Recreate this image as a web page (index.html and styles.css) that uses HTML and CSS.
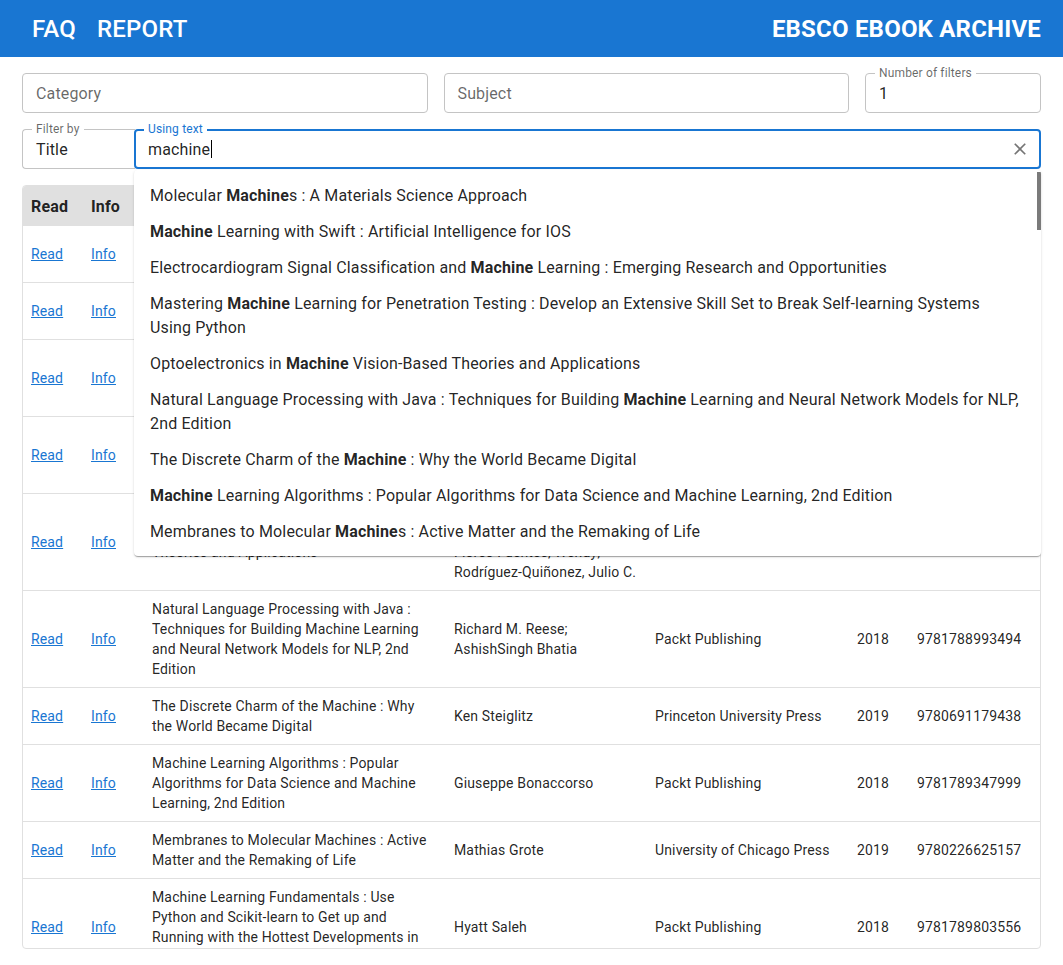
FILE: index.html
```html
<!DOCTYPE html>
<html lang="en">
<head>
<meta charset="utf-8">
<title>EBSCO Ebook Archive</title>
<link rel="stylesheet" href="styles.css">
</head>
<body>
<header class="appbar">
  <nav class="nav">
    <a class="nav-link">FAQ</a>
    <a class="nav-link">REPORT</a>
  </nav>
  <div class="brand">EBSCO EBOOK ARCHIVE</div>
</header>

<main class="content">
  <div class="filters-row">
    <div class="field"><span class="placeholder">Category</span></div>
    <div class="field"><span class="placeholder">Subject</span></div>
    <div class="field">
      <span class="float-label">Number of filters</span>
      <span class="value">1</span>
    </div>
  </div>

  <div class="search-row">
    <div class="field filter-by">
      <span class="float-label">Filter by</span>
      <span class="value">Title</span>
    </div>
    <div class="field search focused">
      <span class="float-label">Using text</span>
      <span class="value">machine<span class="caret"></span></span>
      <svg class="clear" viewBox="0 0 24 24" width="20" height="20"><path d="M19 6.41 17.59 5 12 10.59 6.41 5 5 6.41 10.59 12 5 17.59 6.41 19 12 13.41 17.59 19 19 17.59 13.41 12z"/></svg>

      <div class="popup">
        <ul class="options">
          <li>Molecular <b>Machine</b>s : A Materials Science Approach</li>
          <li><b>Machine</b> Learning with Swift : Artificial Intelligence for IOS</li>
          <li>Electrocardiogram Signal Classification and <b>Machine</b> Learning : Emerging Research and Opportunities</li>
          <li>Mastering <b>Machine</b> Learning for Penetration Testing : Develop an Extensive Skill Set to Break Self-learning Systems Using Python</li>
          <li>Optoelectronics in <b>Machine</b> Vision-Based Theories and Applications</li>
          <li>Natural Language Processing with Java : Techniques for Building <b>Machine</b> Learning and Neural Network Models for NLP, 2nd Edition</li>
          <li>The Discrete Charm of the <b>Machine</b> : Why the World Became Digital</li>
          <li><b>Machine</b> Learning Algorithms : Popular Algorithms for Data Science and Machine Learning, 2nd Edition</li>
          <li>Membranes to Molecular <b>Machine</b>s : Active Matter and the Remaking of Life</li>
          <li><b>Machine</b> Learning Fundamentals : Use Python and Scikit-learn to Get up and Running with the Hottest Developments in Machine Learning</li>
        </ul>
        <div class="thumb"></div>
      </div>
    </div>
  </div>

  <div class="table-wrap">
    <table class="books">
      <colgroup>
        <col class="c-read"><col class="c-info"><col class="c-title"><col class="c-author"><col class="c-pub"><col class="c-year"><col class="c-isbn">
      </colgroup>
      <thead>
        <tr><th>Read</th><th>Info</th><th>Title</th><th>Author</th><th>Publisher</th><th>Year</th><th>ISBN</th></tr>
      </thead>
      <tbody>
        <tr><td><a class="lnk">Read</a></td><td><a class="lnk">Info</a></td><td>Molecular Machines : A Materials Science Approach</td><td>Bruce A. Smith</td><td>CRC Press</td><td>2018</td><td>9781138556379</td></tr>
        <tr><td><a class="lnk">Read</a></td><td><a class="lnk">Info</a></td><td>Machine Learning with Swift : Artificial Intelligence for IOS</td><td>Alexander Sosnovshchenko</td><td>Packt Publishing</td><td>2018</td><td>9781787121515</td></tr>
        <tr><td><a class="lnk">Read</a></td><td><a class="lnk">Info</a></td><td>Electrocardiogram Signal Classification and Machine Learning : Emerging Research and Opportunities</td><td>Pinky Soni</td><td>IGI Global</td><td>2018</td><td>9781522555803</td></tr>
        <tr><td><a class="lnk">Read</a></td><td><a class="lnk">Info</a></td><td>Mastering Machine Learning for Penetration Testing : Develop an Extensive Skill Set to Break Self-learning Systems</td><td>Chiheb Chebbi</td><td>Packt Publishing</td><td>2018</td><td>9781788997409</td></tr>
        <tr><td><a class="lnk">Read</a></td><td><a class="lnk">Info</a></td><td>Optoelectronics in Machine Vision-Based Theories and Applications</td><td>Rivas-Lopez, Moises; Sergiyenko, Oleg; <span class="nw">Flores-Fuentes,</span> Wendy; <span class="nw">Rodríguez-Quiñonez,</span> Julio C.</td><td>IGI Global</td><td>2019</td><td>9781522557517</td></tr>
        <tr><td><a class="lnk">Read</a></td><td><a class="lnk">Info</a></td><td>Natural Language Processing with Java : Techniques for Building Machine Learning and Neural Network Models for NLP, 2nd Edition</td><td>Richard M. Reese; AshishSingh Bhatia</td><td>Packt Publishing</td><td>2018</td><td>9781788993494</td></tr>
        <tr><td><a class="lnk">Read</a></td><td><a class="lnk">Info</a></td><td>The Discrete Charm of the Machine : Why the World Became Digital</td><td>Ken Steiglitz</td><td>Princeton University Press</td><td>2019</td><td>9780691179438</td></tr>
        <tr><td><a class="lnk">Read</a></td><td><a class="lnk">Info</a></td><td>Machine Learning Algorithms : Popular Algorithms for Data Science and Machine Learning, 2nd Edition</td><td>Giuseppe Bonaccorso</td><td>Packt Publishing</td><td>2018</td><td>9781789347999</td></tr>
        <tr><td><a class="lnk">Read</a></td><td><a class="lnk">Info</a></td><td>Membranes to Molecular Machines : Active Matter and the Remaking of Life</td><td>Mathias Grote</td><td>University of Chicago Press</td><td>2019</td><td>9780226625157</td></tr>
        <tr><td><a class="lnk">Read</a></td><td><a class="lnk">Info</a></td><td>Machine Learning Fundamentals : Use Python and Scikit-learn to Get up and Running with the Hottest Developments in Machine Learning</td><td>Hyatt Saleh</td><td>Packt Publishing</td><td>2018</td><td>9781789803556</td></tr>
      </tbody>
    </table>
  </div>
</main>
</body>
</html>
```

FILE: styles.css
```css
* { box-sizing: border-box; }
html, body { margin: 0; padding: 0; }
body {
  font-family: Roboto, "Liberation Sans", Arial, sans-serif;
  color: rgba(0, 0, 0, 0.87);
  background: #fff;
  overflow: hidden;
  letter-spacing: 0.15px;
}

.appbar {
  height: 57px;
  background: #1976d2;
  color: #fff;
  display: flex;
  align-items: center;
  justify-content: space-between;
  padding: 0 22px 0 32px;
}
.nav { display: flex; gap: 21px; }
.nav-link {
  font-size: 24px;
  font-weight: 500;
  letter-spacing: 0.2px;
}
.brand {
  font-size: 24px;
  font-weight: 700;
  letter-spacing: 0.2px;
}

.content {
  padding: 16px 22px 0 22px;
  display: flex;
  flex-direction: column;
  gap: 16px;
}

.filters-row {
  display: grid;
  grid-template-columns: 1fr 1fr 176px;
  gap: 16px;
}

.field {
  position: relative;
  height: 40px;
  border: 1px solid #c4c4c4;
  border-radius: 4px;
  display: flex;
  align-items: center;
  padding: 0 13px;
  font-size: 16px;
}
.placeholder { color: rgba(0, 0, 0, 0.6); }
.value { color: rgba(0, 0, 0, 0.87); display: flex; align-items: center; }
.float-label {
  position: absolute;
  top: -8px;
  left: 9px;
  padding: 0 4px;
  background: #fff;
  font-size: 12px;
  line-height: 14px;
  color: rgba(0, 0, 0, 0.6);
}

.search-row { display: flex; }
.filter-by {
  width: 113px;
  flex: none;
  border-right: none;
  border-radius: 4px 0 0 4px;
}
.search {
  flex: 1;
  margin-left: -1px;
}
.search.focused {
  border: 2px solid #1976d2;
  padding: 0 12px;
}
.search.focused .float-label {
  color: #1976d2;
  left: 8px;
  top: -9px;
}
.caret {
  display: inline-block;
  width: 1px;
  height: 18px;
  background: #000;
  margin-left: 1px;
}
.clear {
  margin-left: auto;
  margin-right: -3px;
  fill: rgba(0, 0, 0, 0.54);
}

.popup {
  position: absolute;
  top: 39px;
  left: -2px;
  right: -2px;
  height: 386px;
  background: #fff;
  border-radius: 4px;
  box-shadow: 0 2px 1px -1px rgba(0,0,0,0.2), 0 1px 1px 0 rgba(0,0,0,0.14), 0 1px 3px 0 rgba(0,0,0,0.12);
  overflow: hidden;
  z-index: 10;
}
.options {
  list-style: none;
  margin: 0;
  padding: 8px 0;
}
.options li {
  padding: 6px 16px;
  font-size: 16px;
  line-height: 24px;
  color: rgba(0, 0, 0, 0.87);
}
.options b { font-weight: 700; }
.thumb {
  position: absolute;
  top: 2px;
  right: 0;
  width: 4px;
  height: 58px;
  background: #7a7a7a;
}

.table-wrap {
  height: 764px;
  border: 1px solid #e0e0e0;
  border-radius: 4px;
  overflow: hidden;
}
.books {
  width: 100%;
  table-layout: fixed;
  border-collapse: collapse;
  font-size: 14px;
  line-height: 20px;
}
.c-read { width: 60px; }
.c-info { width: 61px; }
.c-title { width: 302px; }
.c-author { width: 201px; }
.c-pub { width: 202px; }
.c-year { width: 60px; }
.c-isbn { width: 131px; }

.books th {
  background: #e0e0e0;
  text-align: left;
  font-size: 16px;
  font-weight: 700;
  line-height: 24px;
  padding: 9px 8px 7px;
  color: rgba(0, 0, 0, 0.87);
}
.books td {
  padding: 8px 8px;
  border-top: 1px solid #e0e0e0;
  vertical-align: middle;
  color: rgba(0, 0, 0, 0.87);
}
.books thead + tbody tr:first-child td { border-top: none; }
.nw { white-space: nowrap; }
.lnk {
  color: #1976d2;
  text-decoration: underline;
}
```
